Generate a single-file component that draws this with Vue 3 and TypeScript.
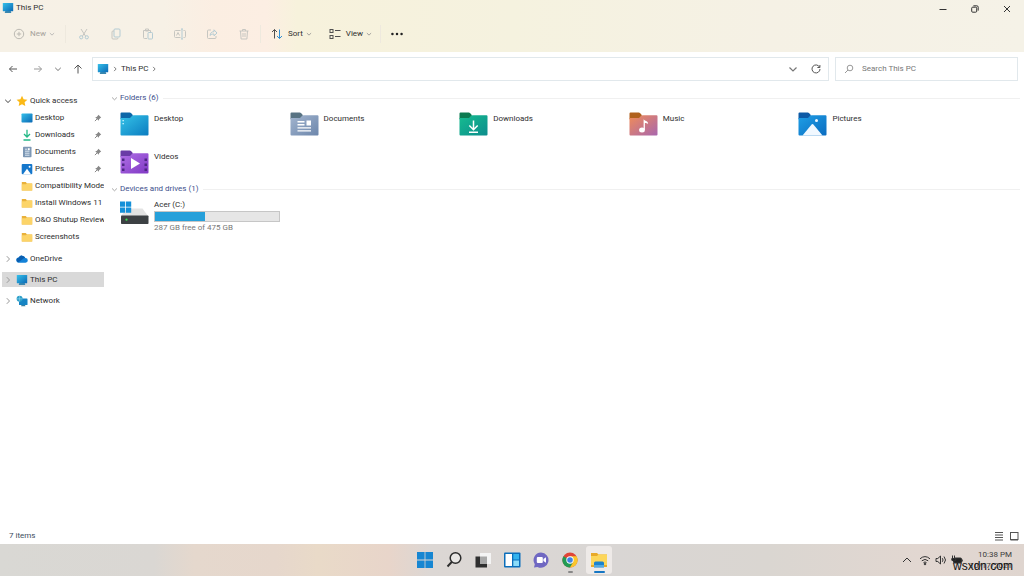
<script setup lang="ts">
import { ref } from 'vue'

interface QuickItem { label: string; icon: string; pinned: boolean }
interface Folder { label: string; tab: string; from: string; to: string; kind: string }

const quickItems: QuickItem[] = [
  { label: 'Desktop', icon: 'desktop', pinned: true },
  { label: 'Downloads', icon: 'downloads', pinned: true },
  { label: 'Documents', icon: 'documents', pinned: true },
  { label: 'Pictures', icon: 'pictures', pinned: true },
  { label: 'Compatibility Mode', icon: 'folder', pinned: false },
  { label: 'Install Windows 11', icon: 'folder', pinned: false },
  { label: 'O&O Shutup Review', icon: 'folder', pinned: false },
  { label: 'Screenshots', icon: 'folder', pinned: false },
]

const roots = ['OneDrive', 'This PC', 'Network']
const selected = ref('This PC')

const folders: Folder[] = [
  { label: 'Desktop', tab: '#0c67a8', from: '#35c3e8', to: '#0b7cc0', kind: 'desktop' },
  { label: 'Documents', tab: '#587383', from: '#a3b5cf', to: '#6c86ab', kind: 'documents' },
  { label: 'Downloads', tab: '#0b7a50', from: '#16bd90', to: '#0c8c8c', kind: 'downloads' },
  { label: 'Music', tab: '#b0611d', from: '#f08c58', to: '#a866ae', kind: 'music' },
  { label: 'Pictures', tab: '#0d5aa6', from: '#1f9fe6', to: '#0b6cc0', kind: 'pictures' },
  { label: 'Videos', tab: '#6a3ba6', from: '#b070e6', to: '#8038c4', kind: 'videos' },
]

const usedPercent = ref(40)
const query = ref('')
const editActions = ['Cut', 'Copy', 'Paste', 'Rename', 'Share', 'Delete']
</script>

<template>
  <div class="desktop">
    <svg class="defs" aria-hidden="true">
      <defs>
        <linearGradient id="screen" x1="0" y1="0" x2="1" y2="1">
          <stop offset="0" stop-color="#35c0ea" /><stop offset="1" stop-color="#0a68b4" />
        </linearGradient>
        <symbol id="pc" viewBox="0 0 12 11">
          <path d="M3.5 8h5l.8 2.5H2.7z" fill="#3a87ae" />
          <rect x=".8" y=".5" width="10.400" height="8.300" rx=".6" fill="url(#screen)" />
        </symbol>
        <symbol id="chev-down" viewBox="0 0 8 8"><path d="M1.2 2.8 4 5.5l2.8-2.7" fill="none" stroke="currentColor" /></symbol>
        <symbol id="chev-right" viewBox="0 0 8 8"><path d="M2.8 1.2 5.5 4 2.8 6.8" fill="none" stroke="currentColor" /></symbol>
      </defs>
    </svg>

    <header class="chrome">
      <div class="titlebar">
        <svg class="ic12"><use href="#pc" /></svg>
        <h1>This PC</h1>
        <div class="window-buttons">
          <button aria-label="Minimize"><svg viewBox="0 0 10 10"><path d="M1.5 5.500h7" /></svg></button>
          <button aria-label="Restore"><svg viewBox="0 0 10 10"><rect x="1.7" y="3.2" width="5" height="5" rx="1" /><path d="M3.4 1.8h3.4a1.4 1.4 0 0 1 1.4 1.4v3.4" /></svg></button>
          <button aria-label="Close"><svg viewBox="0 0 10 10"><path d="m2 2 6 6M8 2 2 8" /></svg></button>
        </div>
      </div>
      <div class="toolbar" role="toolbar" aria-label="Commands">
        <button class="cmd muted">
          <svg viewBox="0 0 12 12"><circle cx="6" cy="6" r="4.7" /><path d="M6 3.8v4.4M3.8 6h4.4" /></svg>
          <span>New</span><svg class="caret"><use href="#chev-down" /></svg>
        </button>
        <i class="sep"></i>
        <div class="edit-actions">
          <button v-for="a in editActions" :key="a" class="cmd faded" :aria-label="a">
            <svg v-if="a === 'Cut'" viewBox="0 0 12 12"><path d="m3 1 4.6 7.2M9 1 4.400 8.200" /><circle cx="3.200" cy="9.300" r="1.600" class="blue" /><circle cx="8.800" cy="9.300" r="1.600" class="blue" /></svg>
            <svg v-else-if="a === 'Copy'" viewBox="0 0 12 12"><rect x="4" y="1" width="6" height="8" rx="1" class="blue" /><path d="M4 3H3a1 1 0 0 0-1 1v6a1 1 0 0 0 1 1h4a1 1 0 0 0 1-1" /></svg>
            <svg v-else-if="a === 'Paste'" viewBox="0 0 12 12"><path d="M5 10.500H2.500a1 1 0 0 1-1-1v-7h7v2M3.500 1h3v2h-3z" /><rect x="6" y="4.500" width="4.500" height="6.500" rx=".8" class="blue" /></svg>
            <svg v-else-if="a === 'Rename'" viewBox="0 0 12 12"><path d="M6.500 9.500h-5a1 1 0 0 1-1-1v-5a1 1 0 0 1 1-1h5M9.500 2.500h1a1 1 0 0 1 1 1v5a1 1 0 0 1-1 1h-1M2.500 7.500 4 4.500l1.500 3" /><path class="blue" d="M8 1v10M7 1h2M7 11h2" /></svg>
            <svg v-else-if="a === 'Share'" viewBox="0 0 12 12"><path d="M5 2H2.500a1 1 0 0 0-1 1v6.500a1 1 0 0 0 1 1H9a1 1 0 0 0 1-1V8" /><path class="blue" d="M4 7.500c.4-2.500 1.500-3.800 4-3.800V1.800L11 5 8 7.800V6C6.200 6 5 6.400 4 7.500z" /></svg>
            <svg v-else viewBox="0 0 12 12"><path d="M1.500 3h9M4.500 3V1.500h3V3M2.500 3l.6 8h5.800l.6-8M5 5v4M7 5v4" /></svg>
          </button>
        </div>
        <i class="sep"></i>
        <button class="cmd sort">
          <svg viewBox="0 0 12 12"><path d="M3.500 10.500v-9M1 4l2.500-2.500L6 4" /><path class="strong-blue" d="M8.500 1.500v9M6 8l2.500 2.500L11 8" /></svg>
          <span>Sort</span><svg class="caret"><use href="#chev-down" /></svg>
        </button>
        <button class="cmd view">
          <svg viewBox="0 0 12 12"><rect x="1" y="1.500" width="3" height="3" /><rect x="1" y="7.500" width="3" height="3" /><path d="M6 2.500h5.500M6 8.500h5.500" /></svg>
          <span>View</span><svg class="caret"><use href="#chev-down" /></svg>
        </button>
        <i class="sep"></i>
        <button class="cmd more" aria-label="See more"><svg viewBox="0 0 14 12"><circle cx="3" cy="6" r="1.100" /><circle cx="7" cy="6" r="1.100" /><circle cx="11" cy="6" r="1.100" /></svg></button>
      </div>
    </header>

    <nav class="navbar" aria-label="Location">
      <div class="history">
        <button aria-label="Back"><svg viewBox="0 0 10 10"><path d="M9 5H1.500M4.500 2l-3 3 3 3" /></svg></button>
        <button aria-label="Forward" class="dim"><svg viewBox="0 0 10 10"><path d="M1 5h7.500M5.500 2l3 3-3 3" /></svg></button>
        <button aria-label="Recent" class="small"><svg><use href="#chev-down" /></svg></button>
        <button aria-label="Up"><svg viewBox="0 0 10 10"><path d="M5 9.500V1M1.500 4.500 5 1l3.500 3.500" /></svg></button>
      </div>
      <div class="address">
        <svg class="ic12"><use href="#pc" /></svg>
        <svg class="crumb"><use href="#chev-right" /></svg>
        <a href="#this-pc">This PC</a>
        <svg class="crumb"><use href="#chev-right" /></svg>
        <button class="drop" aria-label="Previous locations"><svg><use href="#chev-down" /></svg></button>
        <button aria-label="Refresh"><svg viewBox="0 0 10 10"><path d="M8.600 3.200A4 4 0 1 0 9 5M8.900 1v2.500H6.400" /></svg></button>
      </div>
      <label class="search">
        <svg viewBox="0 0 10 10"><circle cx="6" cy="4" r="2.800" /><path d="M4 6 1 9" /></svg>
        <input v-model="query" type="search" placeholder="Search This PC" aria-label="Search This PC" />
      </label>
    </nav>

    <div class="body">
      <aside class="tree">
        <div class="quick">
          <button class="row top">
            <svg class="twist open"><use href="#chev-down" /></svg>
            <svg class="ic12" viewBox="0 0 12 12"><path d="m6 .8 1.600 3.400 3.800.5-2.800 2.600.7 3.800L6 9.300l-3.300 1.800.7-3.800L.6 4.700l3.800-.5z" fill="#fbb916" /></svg>
            <span>Quick access</span>
          </button>
          <button v-for="q in quickItems" :key="q.label" class="row child">
            <svg class="ic12" viewBox="0 0 12 12">
              <template v-if="q.icon === 'desktop'"><rect x=".5" y="1.500" width="11" height="9" rx=".8" fill="url(#screen)" /></template>
              <template v-else-if="q.icon === 'downloads'"><path d="M6 .8v7M3 5l3 3 3-3M2.500 11h7" fill="none" stroke="#23b886" stroke-width="1.300" /></template>
              <template v-else-if="q.icon === 'documents'"><rect x="2" y=".8" width="8.500" height="10.500" rx=".8" fill="#7d98b5" /><path d="M4 3.200h2M4 5.200h4.500M4 7.200h4.500M4 9.200h4.500" stroke="#e8f1f8" stroke-width=".9" /><path d="M6.800 2.200h1.900v2H6.800z" fill="#fff" /></template>
              <template v-else-if="q.icon === 'pictures'"><rect x=".7" y="1" width="10.600" height="10.200" rx="1" fill="#1577cb" /><path d="m2 11.200 4-5.500 4 5.500z" fill="#fff" /><circle cx="8.600" cy="3.700" r="1" fill="#fff" /></template>
              <template v-else><path d="M.8 2h4l1.200 1.400h5.200v7H.8z" fill="#e9b13b" /><path d="M.8 4.200h4l1-.8h5.400v7H.8z" fill="#fcd468" /></template>
            </svg>
            <span>{{ q.label }}</span>
            <svg v-if="q.pinned" class="pin" viewBox="0 0 8 8"><path d="M4.400.8 7.200 3.600l-.8.4-1.300 1.300-.3 1.500L1.200 3.200l1.500-.3L4 1.600z" fill="#888" /><path d="M3 5 .9 7.100" stroke="#888" /></svg>
          </button>
        </div>
        <button v-for="r in roots" :key="r" class="row root" :class="{ selected: r === selected }" @click="selected = r">
          <svg class="twist"><use href="#chev-right" /></svg>
          <svg v-if="r === 'OneDrive'" class="ic12" viewBox="0 0 12 12"><path d="M3 9.800a2.600 2.600 0 0 1-.3-5.200A3.600 3.600 0 0 1 9.300 5a2.400 2.400 0 0 1 .2 4.800z" fill="#1382d8" /><path d="M2.700 4.600A3.600 3.600 0 0 1 9.300 5C7 5.100 6.300 6.800 2 9.500A2.600 2.600 0 0 1 2.700 4.600z" fill="#0a5eb0" /></svg>
          <svg v-else-if="r === 'This PC'" class="ic12"><use href="#pc" /></svg>
          <svg v-else class="ic12" viewBox="0 0 12 12"><rect x="3" y="3.500" width="8.500" height="6.500" rx=".6" fill="#1684c4" /><path d="M5.500 10h3.500l.5 1.300H5z" fill="#387fa0" /><circle cx="3.600" cy="3.800" r="3" fill="#2c9fc9" /><path d="M.8 3.800h5.600M3.600 1v5.600" stroke="#a5e0f3" stroke-width=".5" /></svg>
          <span>{{ r }}</span>
        </button>
      </aside>

      <main class="content">
        <section>
          <h2><svg><use href="#chev-down" /></svg>Folders (6)</h2>
          <div class="grid">
            <a v-for="f in folders" :key="f.label" class="tile" href="#folder">
              <svg class="big" viewBox="0 0 29 24">
                <defs>
                  <linearGradient :id="'g-' + f.kind" x1="0" y1="0" x2="1" y2="1">
                    <stop offset="0" :stop-color="f.from" /><stop offset="1" :stop-color="f.to" />
                  </linearGradient>
                </defs>
                <path d="M.5 1.500a1 1 0 0 1 1-1h8.200q.8 0 1.300.6L13 3.300l-3 4H.5z" :fill="f.tab" />
                <path d="M.5 6h8.700q.8 0 1.300-.5l1.800-1.700q.5-.5 1.200-.5h14a1 1 0 0 1 1 1v18.200a1 1 0 0 1-1 1h-26a1 1 0 0 1-1-1z" :fill="`url(#g-${f.kind})`" />
                <g v-if="f.kind === 'desktop'" fill="#d5f7ff"><rect x="2.500" y="8" width="1.300" height="1.300" /><rect x="2.500" y="11" width="1.300" height="1.300" /></g>
                <g v-else-if="f.kind === 'documents'" fill="#fff"><path d="M7.500 9h7v1.400h-7zM7.500 12h7v1.400h-7zM16.500 8.500H21v5h-4.500zM7.500 15.200H21v1.400H7.500zM7.500 18.200H21v1.400H7.500z" /></g>
                <g v-else-if="f.kind === 'downloads'" fill="none" stroke="#fff" stroke-width="1.500"><path d="M14.500 8.500v9M10.300 13.500l4.200 4.200 4.200-4.200M10 20.200h9" /></g>
                <g v-else-if="f.kind === 'music'" fill="#fff"><path d="M14.600 7.200c.8 1.800 4.700 1.300 4.500 4.700-1-.9-2-.8-3.200-.9v7h-1.300z" /><ellipse cx="13" cy="18" rx="2.900" ry="2.500" /></g>
                <g v-else-if="f.kind === 'pictures'" fill="#f1f8ff"><path d="m4.500 23.500 9.300-11.200q.7-.8 1.400 0l9.300 11.200z" /><circle cx="18.500" cy="8.500" r="1.500" /></g>
                <g v-else><path d="M11 8v11l9-5.500z" fill="#fff" /><path d="M2 8.500h2.500V11H2zM2 13.500h2.500V16H2zM2 18.500h2.500V21H2zM24.500 8.500H27V11h-2.500zM24.500 13.500H27V16h-2.500zM24.500 18.500H27V21h-2.500z" fill="#4d2783" /></g>
              </svg>
              <span>{{ f.label }}</span>
            </a>
          </div>
        </section>
        <section>
          <h2><svg><use href="#chev-down" /></svg>Devices and drives (1)</h2>
          <a class="drive" href="#drive">
            <svg class="big" viewBox="0 0 29 24">
              <path d="M4 11 7 7.500h15.500L28 15H1z" fill="#e3e3e3" />
              <rect x="1" y="14.500" width="27.500" height="8.500" rx=".8" fill="#3d4144" /><circle cx="6.500" cy="18.700" r="1.100" fill="#3ee054" />
              <path d="M0 .5h5.200v5.200H0zM6 .5h5.200v5.200H6zM0 6.500h5.200v5.200H0zM6 6.500h5.200v5.200H6z" fill="#1590d8" />
            </svg>
            <div class="drive-info">
              <span>Acer (C:)</span>
              <div class="bar" role="meter" aria-label="Used space" :aria-valuenow="usedPercent" aria-valuemin="0" aria-valuemax="100"><div class="fill" :style="{ width: usedPercent + '%' }"></div></div>
              <span class="free">287 GB free of 475 GB</span>
            </div>
          </a>
        </section>
      </main>
    </div>

    <div class="status">
      <span>7 items</span>
      <div>
        <button aria-label="Details view"><svg viewBox="0 0 10 10"><path d="M1 1.500h8M1 4h8M1 6.500h8M1 9h8" /></svg></button>
        <button aria-label="Large icons view"><svg viewBox="0 0 10 10"><rect x="1.500" y="1.500" width="7.500" height="7" /><path d="M1.500 9h7.500" /></svg></button>
      </div>
    </div>

    <footer class="taskbar">
      <div class="apps">
        <button aria-label="Start"><svg viewBox="0 0 18 18"><path d="M1 1h7.600v7.600H1zM9.400 1H17v7.600H9.400zM1 9.400h7.600V17H1zM9.400 9.400H17V17H9.400z" fill="#1686d2" /></svg></button>
        <button aria-label="Search"><svg viewBox="0 0 18 18"><circle cx="10.500" cy="7" r="5.300" fill="#e9e7e5" stroke="#2c2c2c" stroke-width="1.500" /><path d="m6.700 11-4.200 4.500" stroke="#2c2c2c" stroke-width="1.900" /></svg></button>
        <button aria-label="Task view"><svg viewBox="0 0 18 18"><path d="M6 2h11v11H6z" fill="#f4f4f4" /><path d="M1.500 5.500H6V13h7v3.500H1.500z" fill="#2f2f2f" /><path d="M6 5.500h7V13H6z" fill="#a8a8a8" /></svg></button>
        <button aria-label="Widgets"><svg viewBox="0 0 18 18"><rect x="1" y="1.500" width="16.500" height="15" rx="1" fill="#0b6ebb" /><path d="M2.500 3H9v12H2.500z" fill="#fff" /><path d="M10.300 3H16v5.500h-5.700z" fill="#33b3ee" /><path d="M10.300 9.500H16V15h-5.700z" fill="#8bdcf9" /></svg></button>
        <button aria-label="Chat"><svg viewBox="0 0 18 18"><path d="M9 1.500a7.600 7.600 0 1 1-3.500 14.400L2 16.600l.8-3.400A7.600 7.600 0 0 1 9 1.500z" fill="#7068c2" /><rect x="4.800" y="6" width="6" height="6" rx="1" fill="#fff" /><path d="m11.400 8 2.600-1.800v5.600L11.400 10z" fill="#fff" /></svg></button>
        <button aria-label="Chrome" class="running"><svg viewBox="0 0 18 18"><circle cx="9" cy="9" r="7.600" fill="#e04538" /><path d="M2.400 5.200A7.600 7.600 0 0 0 9 16.600l3.300-5.700L9 9z" fill="#229b54" /><path d="M15.600 5.200A7.600 7.600 0 0 1 9 16.600l3.300-5.700L9 5.200z" fill="#f9c62d" /><circle cx="9" cy="9" r="3.700" fill="#fff" /><circle cx="9" cy="9" r="2.800" fill="#3f82e5" /></svg></button>
        <button aria-label="File Explorer" class="active"><svg viewBox="0 0 18 18"><path d="M1 2h6l1.500 1.500H17V16H1z" fill="#e8a928" /><path d="M1 5h6l1.500-1.500H17V14H1z" fill="#fcd65a" /><path d="M4 12q0-1.500 1.500-1.500h7Q14 10.500 14 12v4.500H4z" fill="#1a82ce" /><path d="M4 14.500h10v1H4z" fill="#8ed2f5" /></svg></button>
      </div>
      <div class="tray">
        <button aria-label="Show hidden icons"><svg viewBox="0 0 12 12"><path d="m2 8 4-4 4 4" /></svg></button>
        <button aria-label="Network, volume and battery" class="trio">
          <svg viewBox="0 0 12 12"><path d="M1 4.800q5-4.400 10 0M2.800 6.800q3.200-2.800 6.400 0M4.500 8.600q1.500-1.300 3 0" /><circle cx="6" cy="10" r=".8" fill="#333" /></svg>
          <svg viewBox="0 0 12 12"><path d="M1 4.500v3h1.800L5.500 10V2L2.800 4.500zM7.300 4.200q1.500 1.800 0 3.600M9 2.500q3 3.500 0 7" /></svg>
          <svg viewBox="0 0 12 12"><rect x="2.500" y="4" width="8" height="5" rx="1" fill="#222" /><path d="M1.500 1.500v3M3.500 1.500v3M.8 4.500h4v1.800q-2 1.500-4 0z" fill="#222" /><path d="M11.300 5.500v2" /></svg>
        </button>
        <button class="clock"><time>10:38 PM</time><time>10/17/2021</time></button>
      </div>
      <span class="mark">wsxdn.com</span>
    </footer>
  </div>
</template>

<style>
body { margin: 0; }
</style>

<style scoped>
.desktop { min-height: 100vh; display: flex; flex-direction: column; background: #fff; color: #2e2e2e; font: 8px/12px Roboto, "Open Sans", sans-serif; position: relative; }
.defs { position: absolute; width: 0; height: 0; }
button { font: inherit; color: inherit; border: 0; padding: 0; background: none; display: flex; align-items: center; justify-content: center; }
a { color: inherit; text-decoration: none; }
svg { flex: none; fill: none; stroke-width: 1; }
h1, h2 { margin: 0; font: inherit; }
.ic12 { width: 12px; height: 12px; }

.chrome { background: linear-gradient(90deg, #f6f1e6 0, #f7f1e6 16%, #fbeee2 21%, #fceee3 26%, #f7f2dc 29%, #f5f2df 50%, #f5f1e5 75%, #f5f2e7 100%); }
.titlebar { display: flex; align-items: center; height: 18px; padding-left: 2px; }
.titlebar .ic12 { margin-bottom: 3px; }
.titlebar h1 { margin: 0 0 2px 2px; }
.window-buttons { margin-left: auto; display: flex; padding-right: 1px; }
.window-buttons button { width: 32px; height: 18px; }
.window-buttons svg { width: 10px; height: 10px; stroke: #333; }
.toolbar { display: flex; align-items: center; height: 34px; padding: 0 0 2px 13px; box-sizing: border-box; }
.cmd svg { width: 12px; height: 12px; stroke: #505050; }
.cmd span { margin-left: 5px; }
.cmd .caret { width: 6px; height: 6px; margin-left: 3px; color: #888; stroke: none; }
.muted { color: #a5a29b; }
.muted svg { stroke: #bbb9b2; }
.muted .caret { color: #aaa; }
.sep { width: 1px; height: 18px; background: #eee9de; margin: 0 10px; }
.muted + .sep { margin-right: 12px; }
.edit-actions { display: flex; gap: 20px; }
.faded svg { stroke: #c6c6c1; }
.faded .blue { stroke: #b3cbd3; }
.sort .strong-blue { stroke: #2f8fd3; }
.view { margin-left: 17px; }
.view + .sep { margin: 0 8px; }
.more svg { width: 16px; height: 14px; fill: #222; stroke: none; }

.navbar { display: flex; align-items: center; gap: 6px; padding: 5px 6px 3px 8px; }
.history { display: flex; align-items: center; gap: 15px; width: 78px; }
.navbar button svg, .search svg { width: 10px; height: 10px; stroke: #555; color: #777; }
.navbar button.dim svg { stroke: #999; }
.navbar button.small svg { width: 8px; height: 8px; stroke: none; }
.history button.small { margin: 0 -4px; }
.address { flex: 1; display: flex; align-items: center; height: 24px; box-sizing: border-box; border: 1px solid #e1e8ec; padding: 0 7px 0 4px; }
.crumb { width: 6px; height: 6px; margin: 0 3px; color: #555; }
.address a + .crumb { margin-left: 2px; }
.address .drop { margin-left: auto; margin-right: 13px; }
.address .drop svg { stroke: none; }
.search { width: 183px; height: 24px; box-sizing: border-box; border: 1px solid #e1e8ec; display: flex; align-items: center; padding-left: 8px; gap: 8px; }
.search svg { stroke: #999; }
.search input { flex: 1; min-width: 0; border: 0; outline: 0; padding: 0; background: none; font: inherit; color: #444; appearance: none; }
.search input::placeholder { color: #777; opacity: 1; }

.body { flex: 1; display: flex; }
.tree { width: 104px; padding: 8px 0 0 2px; box-sizing: border-box; flex: none; }
.quick { margin-bottom: 6px; }
.row { width: 100%; justify-content: flex-start; height: 17px; overflow: hidden; white-space: nowrap; }
.row span { margin-left: 2px; }
.twist { width: 8px; height: 8px; margin: 0 4px 0 2px; color: #999; }
.twist.open { color: #444; }
.child { padding-left: 19px; }
.child .pin { width: 8px; height: 8px; margin: 0 2px 0 auto; }
.root { height: 15px; margin-bottom: 6px; }
.selected { background: #d9d9d9; }

.content { flex: 1; min-width: 0; padding: 6px 4px 0 7px; }
h2 { display: flex; align-items: center; height: 16px; color: #3d4f8c; }
h2 svg { width: 7px; height: 7px; margin-right: 2px; color: #999; }
h2::after { content: ""; flex: 1; height: 1px; background: #f0f0f0; margin-left: 5px; }
.grid { display: grid; grid-template-columns: repeat(auto-fill, minmax(165px, 1fr)); grid-auto-rows: 36px; row-gap: 2px; padding: 0 52px 1px 9px; }
.tile { display: flex; padding-top: 6px; }
.big { width: 29px; height: 24px; }
.tile span { margin-left: 5px; line-height: 14px; }
.drive { display: flex; padding: 4px 0 0 9px; width: 160px; }
.drive-info { margin: -2px 0 0 5px; flex: 1; display: flex; flex-direction: column; }
.bar { height: 11px; box-sizing: border-box; border: 1px solid #c6c6c6; background: #e6e6e6; }
.fill { height: 100%; background: #26a0da; }
.free { color: #777; }

.status { display: flex; align-items: center; justify-content: space-between; height: 16px; padding: 0 5px 0 9px; color: #3b4d5c; }
.status div { display: flex; gap: 5px; }
.status svg { width: 10px; height: 10px; stroke: #555; }

.taskbar { height: 32px; position: relative; display: flex; justify-content: center; align-items: center; background: linear-gradient(90deg, #d9d8d4 0, #dad7d3 15%, #e5d8cd 19%, #e6d7cc 27%, #e9dac8 31%, #e8d5ca 38%, #dcd7d4 42%, #d9d6d4 60%, #dad6d1 75%, #e2d7d1 90%, #dfd5cf 100%); }
.apps { display: flex; gap: 3px; }
.apps button { width: 26px; height: 28px; border-radius: 3px; position: relative; }
.apps svg { width: 18px; height: 18px; }
.apps .active { background: #eeeae8; }
.apps .running::after, .apps .active::after { content: ""; position: absolute; bottom: 1px; width: 5px; height: 2px; border-radius: 1px; background: #888; }
.apps .active::after { width: 11px; background: #1676c3; }
.tray { position: absolute; right: 12px; top: 0; height: 100%; display: flex; align-items: center; }
.tray svg { width: 12px; height: 12px; stroke: #333; }
.trio { gap: 4px; margin: 0 6px; }
.clock { flex-direction: column; align-items: flex-end; line-height: 11px; color: #3c3c3c; }
.mark { position: absolute; right: 11px; bottom: 2px; font: 12px/16px "Liberation Sans", Arial, sans-serif; color: #111; }
</style>
